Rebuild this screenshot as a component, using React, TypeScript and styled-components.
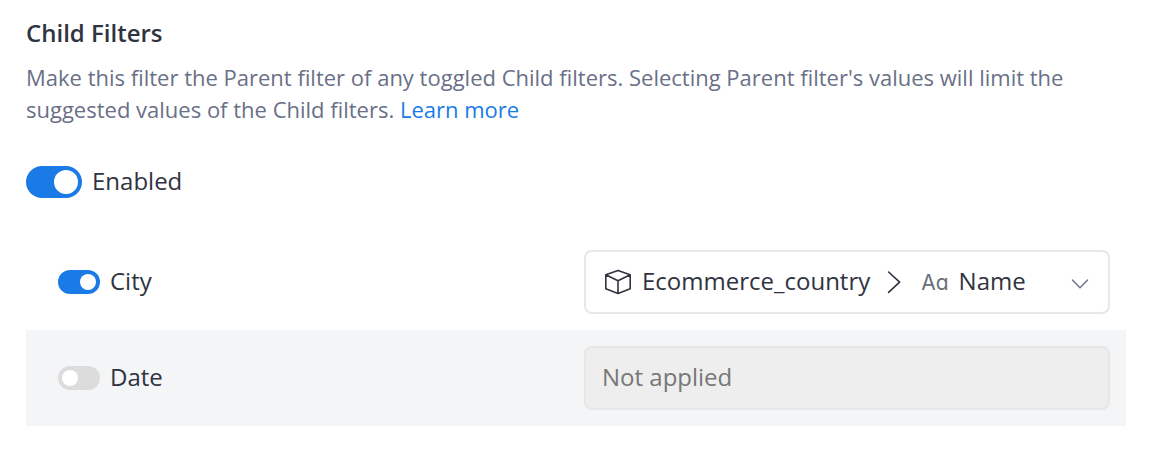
import React from 'react';
import styled, { createGlobalStyle } from 'styled-components';

const Global = createGlobalStyle`
  * { box-sizing: border-box; }
  body { margin: 0; background: #fff; font-family: 'Open Sans', sans-serif; color: #303340; }
`;
const Panel = styled.main`
  width: 1154px; height: 460px; padding: 16px 28px 0 26px; overflow: hidden;
`;
const Title = styled.h2`
  margin: 0; font-size: 24px; line-height: 34px; font-weight: 600;
`;
const Description = styled.p`
  margin: 11px 0 0; font-size: 22px; line-height: 32px; color: #697087; white-space: nowrap;
`;
const Link = styled.a`
  color: #197be6; text-decoration: none;
`;
const Enabled = styled.div`
  display: flex; align-items: center; gap: 10px; height: 32px; margin-top: 41px;
`;
const Text = styled.span`
  padding-bottom: 2px; font-size: 24px; line-height: 32px;
`;
const Switch = styled.span<{ $on?: boolean; $large?: boolean }>`
  display: flex; align-items: center; flex: none;
  justify-content: ${p => (p.$on ? 'flex-end' : 'flex-start')};
  width: ${p => (p.$large ? 56 : 42)}px;
  height: ${p => (p.$large ? 32 : 24)}px;
  padding: 4px; border-radius: 16px;
  background: ${p => (p.$on ? '#1b7be6' : '#dcdcdc')};
  &::after {
    content: ''; height: 100%; aspect-ratio: 1; border-radius: 50%; background: #fff;
  }
`;
const Rows = styled.div`margin-top: 36px;`;
const Row = styled.div<{ $shaded?: boolean }>`
  display: flex; align-items: center; justify-content: space-between;
  height: 96px; padding: 0 16px 0 32px;
  background: ${p => (p.$shaded ? '#f4f5f7' : '#fff')};
`;
const Label = styled.div`
  display: flex; align-items: center; gap: 10px;
`;
const Select = styled.div<{ $disabled?: boolean }>`
  display: flex; align-items: center; width: 526px; height: 64px;
  padding: 0 18px 0 16px; border: 2px solid #e7e7e7; border-radius: 8px;
  color: ${p => (p.$disabled ? '#777' : 'inherit')};
  background: ${p => (p.$disabled ? '#eee' : '#fff')};
`;
const Icon = styled.svg`
  flex: none; fill: none; stroke: currentColor; stroke-linecap: round; stroke-linejoin: round;
`;
const Model = styled(Text)`margin: 0 13px 0 8px;`;
const Arrow = styled(Icon)`color: #6b7186;`;
const TypeMark = styled.span`
  margin: 0 10px 0 18px; padding-top: 2px; color: #6b6e77; font: 400 21px/32px Inter, sans-serif;
  font-feature-settings: 'cv11';
`;
const Spacer = styled.span`flex: 1;`;

export default function App() {
  return (
    <Panel>
      <Global />
      <Title>Child Filters</Title>
      <Description>
        Make this filter the Parent filter of any toggled Child filters. Selecting Parent filter's values will limit the<br />
        suggested values of the Child filters. <Link>Learn more</Link>
      </Description>
      <Enabled><Switch $on $large /><Text>Enabled</Text></Enabled>
      <Rows>
        <Row>
          <Label><Switch $on /><Text>City</Text></Label>
          <Select>
            <Icon width="32" height="32" viewBox="0 0 32 32" strokeWidth="1.6">
              <path d="M16 4.4 28.2 8.8V22.8L16 27.5 3.8 22.8V8.8ZM3.8 8.8 16 14.8 28.2 8.8M16 14.8v12.7" />
            </Icon>
            <Model>Ecommerce_country</Model>
            <Icon width="20" height="24" viewBox="0 0 20 24" strokeWidth="1.6"><path d="m5.6 2 11 10.2-11 10.2" /></Icon>
            <TypeMark>Aa</TypeMark>
            <Text>Name</Text>
            <Spacer />
            <Arrow width="20" height="20" viewBox="0 0 20 20" strokeWidth="1.4"><path d="m2.4 8 7.6 7.7L17.6 8" /></Arrow>
          </Select>
        </Row>
        <Row $shaded>
          <Label><Switch /><Text>Date</Text></Label>
          <Select $disabled><Text>Not applied</Text></Select>
        </Row>
      </Rows>
    </Panel>
  );
}
